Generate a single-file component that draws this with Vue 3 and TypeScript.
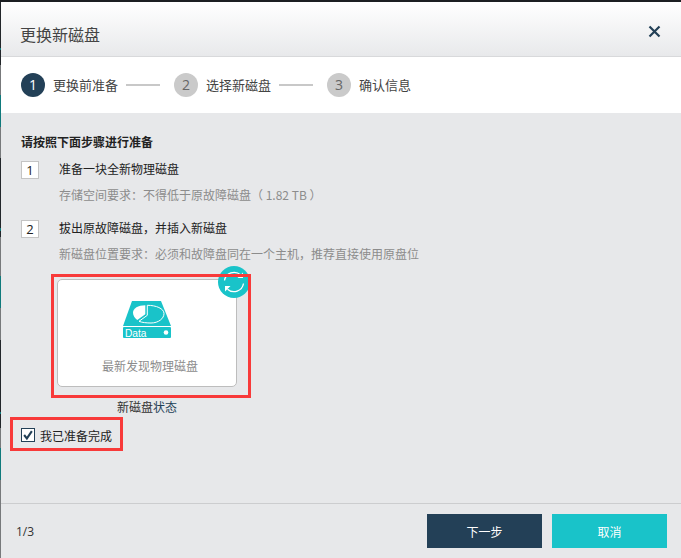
<script setup lang="ts">
const steps = [
  { no: 1, label: '更换前准备', active: true },
  { no: 2, label: '选择新磁盘', active: false },
  { no: 3, label: '确认信息', active: false },
]

const tasks = [
  { no: 1, title: '准备一块全新物理磁盘', hint: '存储空间要求：不得低于原故障磁盘（ 1.82 TB ）' },
  { no: 2, title: '拔出原故障磁盘，并插入新磁盘', hint: '新磁盘位置要求：必须和故障盘同在一个主机，推荐直接使用原盘位' },
]
</script>

<template>
  <div class="page">
    <div class="dialog">
      <header class="head">
        <span class="head-title">更换新磁盘</span>
        <svg class="close" width="13" height="13" viewBox="0 0 13 13">
          <path d="M1.5 1.5l10 10M11.5 1.5l-10 10" stroke="#234057" stroke-width="2.2" fill="none" />
        </svg>
      </header>

      <nav class="steps">
        <template v-for="(s, i) in steps" :key="s.no">
          <span class="dot" :class="{ 'dot--on': s.active }">{{ s.no }}</span>
          <span class="step-label">{{ s.label }}</span>
          <span v-if="i < steps.length - 1" class="line"></span>
        </template>
      </nav>

      <main class="body">
        <h3 class="lead">请按照下面步骤进行准备</h3>
        <div v-for="t in tasks" :key="t.no" class="task">
          <span class="task-no">{{ t.no }}</span>
          <div>
            <p class="task-title">{{ t.title }}</p>
            <p class="task-hint">{{ t.hint }}</p>
          </div>
        </div>

        <div class="card-wrap">
          <div class="card">
            <svg class="disk" width="48" height="37" viewBox="0 0 48 37">
              <path d="M9 0h29l10 25H0z" fill="#19c3c9" />
              <rect x="0" y="26" width="48" height="11" rx="1" fill="#19c3c9" />
              <path d="M22.300 4.300C15 4.300 10 7.500 10 11.500c0 3 1.800 5.800 4.300 7.500l8-5.700z" fill="#fff" />
              <path d="M24.300 4.300V14.300L16 20.300C19 21.600 24 22 28 22 35.500 22 41 17.500 41 12.500 41 7.500 33 4.300 24.300 4.300z" fill="none" stroke="#fff" stroke-width="1" />
              <circle cx="43" cy="31.500" r="2.300" fill="#fff" />
              <text x="2" y="35.500" class="disk-text">Data</text>
            </svg>
            <span class="card-text">最新发现物理磁盘</span>
          </div>
          <span class="card-cap">新磁盘<em>状态</em></span>
          <svg class="sync" width="32" height="32" viewBox="0 0 32 32">
            <circle cx="16" cy="16" r="16" fill="#19c3c9" />
            <path d="M6.500 14.500A9.700 9.700 0 0 1 22.500 8.800" fill="none" stroke="#fff" stroke-width="1.300" />
            <path d="M25.500 17.500A9.700 9.700 0 0 1 9.500 23.200" fill="none" stroke="#fff" stroke-width="1.300" />
            <path d="M25 6.500v5.500h-5.500z" fill="#fff" />
            <path d="M7 25.500V20h5.500z" fill="#fff" />
          </svg>
          <div class="mark mark--card"></div>
        </div>

        <label class="ready">
          <span class="box">
            <svg width="14" height="14" viewBox="0 0 14 14">
              <path d="M2.500 7l3.200 4L11.500 2.500" fill="none" stroke="#234057" stroke-width="2.400" />
            </svg>
          </span>
          <span>我已准备完成</span>
          <div class="mark mark--ready"></div>
        </label>
      </main>

      <footer class="foot">
        <span class="pager">1/3</span>
        <div class="actions">
          <button class="btn btn--next">下一步</button>
          <button class="btn btn--cancel">取消</button>
        </div>
      </footer>
    </div>
  </div>
</template>

<style>
html, body { margin: 0; background: #1c1f22; }
</style>

<style scoped>
.page {
  width: 681px;
  height: 558px;
  padding: 2px 0 0 1px;
  box-sizing: border-box;
  overflow: hidden;
  font-family: "Noto Sans CJK SC", "Liberation Sans", sans-serif;
  background:
    linear-gradient(#1c1f22, #1c1f22) 0 0 / 100% 2px no-repeat,
    linear-gradient(
      #22262a 0 48px, #0f7a7c 48px 50px, #22262a 50px 65px,
      #77797b 65px 95px, #0f7a7c 95px 127px, #77797b 127px 158px,
      #22262a 158px 228px, #0f7a7c 228px 231px, #22262a 231px 237px,
      #77797b 237px 276px, #0f7a7c 276px 308px, #77797b 308px 340px,
      #22262a 340px 412px, #0f7a7c 412px 414px, #22262a 414px 428px,
      #77797b 428px 448px, #0f7a7c 448px 480px, #77797b 480px 558px
    ) 0 0 / 1px 100% no-repeat;
}

.dialog {
  height: 556px;
  display: flex;
  flex-direction: column;
  background: #e7e8ea;
}

.head {
  height: 55px;
  flex: none;
  box-sizing: border-box;
  padding: 0 20px;
  display: flex;
  align-items: center;
  justify-content: space-between;
  background: linear-gradient(#fff, #e8e9eb);
  border-bottom: 1px solid #d8d9db;
}

.head-title {
  font-size: 16px;
  color: #444;
  margin: 10px 0 0 -1px;
}

.close { margin: 4px 0 0 0; }

.steps {
  height: 56px;
  flex: none;
  box-sizing: border-box;
  padding-left: 20px;
  display: flex;
  align-items: center;
  background: #fff;
}

.dot {
  width: 24px;
  height: 24px;
  border-radius: 50%;
  background: #cacaca;
  color: #666;
  font: 14px/24px "Open Sans", "Liberation Sans", sans-serif;
  text-align: center;
}

.dot--on {
  background: #234057;
  color: #fff;
}

.step-label {
  margin: 0 0 2px 8px;
  font-size: 13px;
  color: #444;
}

.line {
  width: 34px;
  height: 2px;
  margin: 0 14px 0 8px;
  background: #c8c8c8;
}

.body {
  flex: 1;
  position: relative;
  padding: 20px 20px 0;
  font-size: 12px;
  color: #222;
}

.lead {
  margin: 0 0 8px;
  font-size: 12px;
  line-height: 18px;
  font-weight: 700;
}

.task {
  display: flex;
  gap: 20px;
  margin-bottom: 14px;
}

.task-no {
  width: 16px;
  height: 16px;
  margin-top: 2px;
  background: #fff;
  border: 1px solid #c4c4c4;
  font: 13px/16px "Open Sans", "Liberation Sans", sans-serif;
  text-align: center;
}

.task-title {
  margin: 1px 0 8px;
  line-height: 18px;
}

.task-hint {
  margin: 0;
  line-height: 18px;
  color: #8c8c8c;
}

.card-wrap {
  position: relative;
  width: 180px;
  margin: 16px 0 0 36px;
}

.card {
  height: 108px;
  box-sizing: border-box;
  display: flex;
  flex-direction: column;
  align-items: center;
  padding-top: 21px;
  background: #fff;
  border: 1px solid #bdbdbd;
  border-radius: 5px;
}

.disk { display: block; }

.disk-text {
  font: 10.200px "Liberation Sans", sans-serif;
  fill: #fff;
}

.card-text {
  margin: 19px 0 0 6px;
  color: #8c8c8c;
  line-height: 18px;
}

.card-cap {
  display: block;
  margin-top: 11px;
  text-align: center;
  line-height: 18px;
  color: #333;
}

.card-cap em {
  font-style: normal;
  color: #234057;
}

.mark {
  position: absolute;
  box-sizing: border-box;
  border: 3px solid #f83a3a;
  pointer-events: none;
}

.mark--card {
  left: -6px;
  top: -5px;
  width: 200px;
  height: 124px;
}

.sync {
  position: absolute;
  left: 161px;
  top: -13px;
}

.ready {
  position: relative;
  display: flex;
  align-items: center;
  gap: 5px;
  margin-top: 10px;
  height: 18px;
  color: #222;
}

.box {
  width: 12px;
  height: 12px;
  border: 1px solid #234057;
  background: #fff;
  display: flex;
  align-items: center;
  justify-content: center;
}

.mark--ready {
  left: -11px;
  top: -9px;
  width: 113px;
  height: 34px;
}

.foot {
  height: 55px;
  flex: none;
  box-sizing: border-box;
  border-top: 1px solid #cccdcf;
  padding: 0 14px 0 15px;
  display: flex;
  align-items: center;
  justify-content: space-between;
}

.pager {
  font: 12px "Open Sans", "Liberation Sans", sans-serif;
  color: #333;
}

.actions {
  display: flex;
  gap: 10px;
}

.btn {
  width: 115px;
  height: 34px;
  border: 0;
  padding: 0;
  color: #fff;
  font: 12px "Noto Sans CJK SC", sans-serif;
}

.btn--next { background: #234057; }
.btn--cancel { background: #19c3c9; }
</style>
